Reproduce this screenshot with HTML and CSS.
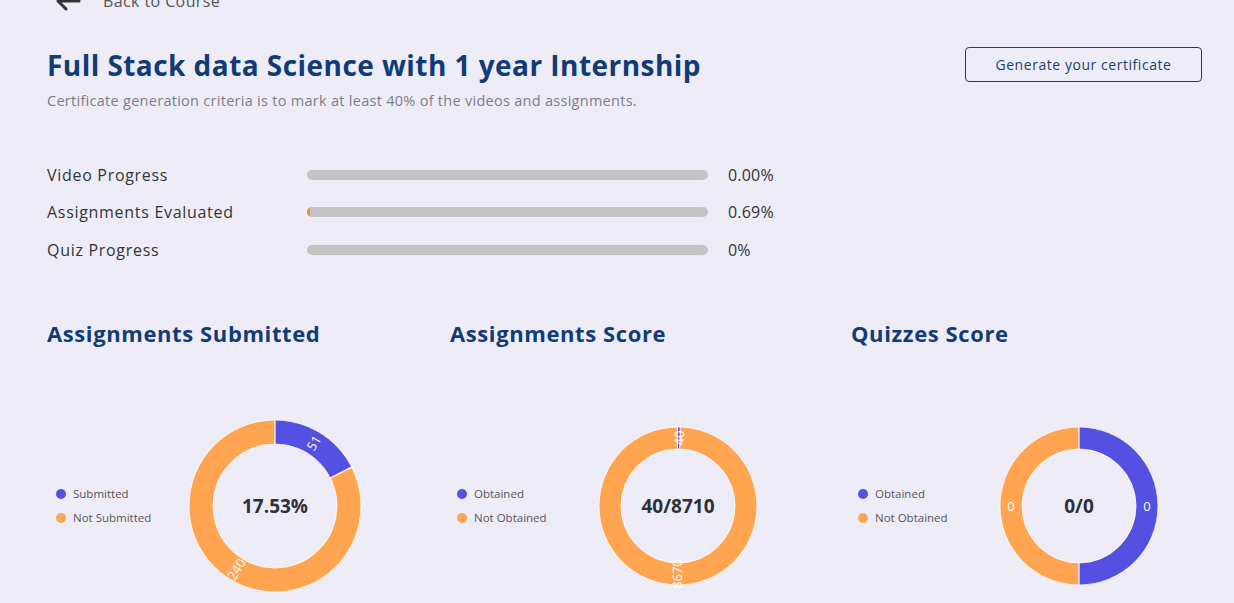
FILE: index.html
```html
<!DOCTYPE html>
<html>
<head>
<meta charset="utf-8">
<link rel="stylesheet" href="styles.css">
</head>
<body>
<div class="page">
  <div class="back">
    <svg class="back-icon" width="26" height="20" viewBox="0 0 26 20"><path d="M24 10 H4 M11 2 L3 10 L11 18" fill="none" stroke="#333" stroke-width="3" stroke-linecap="round" stroke-linejoin="round"/></svg>
    <span class="back-text">Back to Course</span>
  </div>

  <div class="header">
    <div class="header-text">
      <h1 class="title">Full Stack data Science with 1 year Internship</h1>
      <p class="subtitle">Certificate generation criteria is to mark at least 40% of the videos and assignments.</p>
    </div>
    <button class="cert-btn">Generate your certificate</button>
  </div>

  <div class="progress">
    <div class="prow">
      <span class="plabel">Video Progress</span>
      <div class="bar"><div class="fill" style="width:0%"></div></div>
      <span class="pval">0.00%</span>
    </div>
    <div class="prow">
      <span class="plabel">Assignments Evaluated</span>
      <div class="bar"><div class="fill" style="width:0.69%"></div></div>
      <span class="pval">0.69%</span>
    </div>
    <div class="prow">
      <span class="plabel">Quiz Progress</span>
      <div class="bar"><div class="fill" style="width:0%"></div></div>
      <span class="pval">0%</span>
    </div>
  </div>

  <div class="charts">
    <div class="chart">
      <h2 class="chart-title">Assignments Submitted</h2>
      <div class="chart-body">
        <ul class="legend">
          <li><span class="dot blue"></span>Submitted</li>
          <li><span class="dot orange"></span>Not Submitted</li>
        </ul>
        <svg class="donut big" width="180" height="180" viewBox="0 0 180 180">
          <circle cx="90" cy="90" r="74" fill="none" stroke="#FFA552" stroke-width="24"/>
          <circle cx="90" cy="90" r="74" fill="none" stroke="#5450E2" stroke-width="24" stroke-dasharray="81.49 500" transform="rotate(-90 90 90)"/>
          <line x1="90" y1="3" x2="90" y2="29" stroke="#fff" stroke-width="1.2"/>
          <line x1="167.6" y1="50.6" x2="144.4" y2="62.4" stroke="#fff" stroke-width="1.2"/>
          <circle cx="90" cy="90" r="86" fill="none" stroke="#fff" stroke-width="0.8"/>
          <circle cx="90" cy="90" r="62" fill="none" stroke="#fff" stroke-width="0.8"/>
          <text class="seg" x="128.7" y="26.9" transform="rotate(-58.45 128.7 26.9)">51</text>
          <text class="seg" x="51.3" y="153.1" transform="rotate(-58.45 51.3 153.1)">240</text>
          <text class="center" x="90" y="90">17.53%</text>
        </svg>
      </div>
    </div>

    <div class="chart">
      <h2 class="chart-title">Assignments Score</h2>
      <div class="chart-body">
        <ul class="legend">
          <li><span class="dot blue"></span>Obtained</li>
          <li><span class="dot orange"></span>Not Obtained</li>
        </ul>
        <svg class="donut" width="180" height="180" viewBox="0 0 180 180">
          <circle cx="90" cy="90" r="68" fill="none" stroke="#FFA552" stroke-width="22"/>
          <circle cx="90" cy="90" r="68" fill="none" stroke="#5450E2" stroke-width="22" stroke-dasharray="1.96 500" transform="rotate(-90 90 90)"/>
          <line x1="89.4" y1="10" x2="89.4" y2="34" stroke="#fff" stroke-width="0.9"/>
          <line x1="92.3" y1="10" x2="91.7" y2="34" stroke="#fff" stroke-width="0.9"/>
          <circle cx="90" cy="90" r="79" fill="none" stroke="#fff" stroke-width="0.8"/>
          <circle cx="90" cy="90" r="57" fill="none" stroke="#fff" stroke-width="0.8"/>
          <text class="seg" x="91" y="22" transform="rotate(-89.2 91 22)">40</text>
          <text class="seg" x="89" y="158" transform="rotate(-89.2 89 158)">8670</text>
          <text class="center" x="90" y="90">40/8710</text>
        </svg>
      </div>
    </div>

    <div class="chart">
      <h2 class="chart-title">Quizzes Score</h2>
      <div class="chart-body">
        <ul class="legend">
          <li><span class="dot blue"></span>Obtained</li>
          <li><span class="dot orange"></span>Not Obtained</li>
        </ul>
        <svg class="donut" width="180" height="180" viewBox="0 0 180 180">
          <circle cx="90" cy="90" r="68" fill="none" stroke="#FFA552" stroke-width="22"/>
          <circle cx="90" cy="90" r="68" fill="none" stroke="#5450E2" stroke-width="22" stroke-dasharray="213.63 500" transform="rotate(-90 90 90)"/>
          <line x1="90" y1="10" x2="90" y2="34" stroke="#fff" stroke-width="1.2"/>
          <line x1="90" y1="146" x2="90" y2="170" stroke="#fff" stroke-width="1.2"/>
          <circle cx="90" cy="90" r="79" fill="none" stroke="#fff" stroke-width="0.8"/>
          <circle cx="90" cy="90" r="57" fill="none" stroke="#fff" stroke-width="0.8"/>
          <text class="seg" x="158" y="90">0</text>
          <text class="seg" x="22" y="90">0</text>
          <text class="center" x="90" y="90">0/0</text>
        </svg>
      </div>
    </div>
  </div>
</div>
</body>
</html>
```

FILE: styles.css
```css
* { box-sizing: border-box; }
html, body { margin: 0; padding: 0; }
body {
  background: #EEEDF7;
  font-family: "Open Sans", "Noto Sans", sans-serif;
  color: #333;
  overflow: hidden;
}
.page {
  padding: 0 32px 0 47px;
}
.back {
  display: flex;
  align-items: center;
  gap: 22px;
  margin-top: -11px;
  padding-left: 8px;
  height: 24px;
}
.back-text {
  font-size: 16px;
  letter-spacing: 0.4px;
  color: #555;
}
.header {
  display: flex;
  justify-content: space-between;
  align-items: flex-start;
  margin-top: 33px;
}
.title {
  margin: 0;
  font-size: 28px;
  line-height: 38px;
  font-weight: 700;
  color: #113B77;
  letter-spacing: 0.45px;
}
.subtitle {
  margin: 7px 0 0;
  font-size: 14.5px;
  line-height: 20px;
  letter-spacing: 0.28px;
  color: #7d7d86;
}
.cert-btn {
  margin-top: 1px;
  width: 237px;
  height: 35px;
  background: transparent;
  border: 1px solid #1D3C6E;
  border-radius: 4px;
  font-family: "Open Sans", sans-serif;
  font-size: 14px;
  letter-spacing: 0.55px;
  color: #1D3C6E;
}
.progress {
  margin-top: 45px;
  display: flex;
  flex-direction: column;
}
.prow {
  display: flex;
  align-items: center;
  height: 37.5px;
}
.plabel {
  width: 260px;
  font-size: 16px;
  letter-spacing: 0.7px;
  color: #333;
}
.bar {
  width: 401px;
  height: 10px;
  border-radius: 5px;
  background: #C4C4C4;
  overflow: hidden;
}
.fill {
  height: 100%;
  background: #F0912E;
}
.pval {
  margin-left: 20px;
  font-size: 16px;
  letter-spacing: 0.2px;
  color: #333;
}
.charts {
  margin-top: 49px;
  display: grid;
  grid-template-columns: 403px 401px 1fr;
}
.chart-title {
  margin: 0;
  font-size: 22px;
  line-height: 30px;
  font-weight: 700;
  letter-spacing: 0.6px;
  color: #113B77;
}
.chart-body {
  margin-top: 68px;
  height: 180px;
  display: flex;
  align-items: center;
}
.legend {
  list-style: none;
  margin: 0;
  padding: 0 0 0 9px;
  width: 138px;
  display: flex;
  flex-direction: column;
  gap: 6px;
  font-size: 11.5px;
  color: #555;
}
.legend li {
  display: flex;
  align-items: center;
  gap: 7px;
  height: 18px;
}
.dot {
  width: 10px;
  height: 10px;
  border-radius: 50%;
  display: inline-block;
}
.dot.blue { background: #5450E2; }
.dot.orange { background: #FFA552; }
.chart:nth-child(2) .legend,
.chart:nth-child(3) .legend { padding-left: 7px; }
.donut { display: block; }
.seg {
  fill: #fff;
  font-family: "Open Sans", sans-serif;
  font-size: 13px;
  text-anchor: middle;
  dominant-baseline: central;
}
.center {
  fill: #2B303B;
  font-family: "Open Sans", sans-serif;
  font-weight: 700;
  font-size: 19px;
  text-anchor: middle;
  dominant-baseline: central;
}
```
